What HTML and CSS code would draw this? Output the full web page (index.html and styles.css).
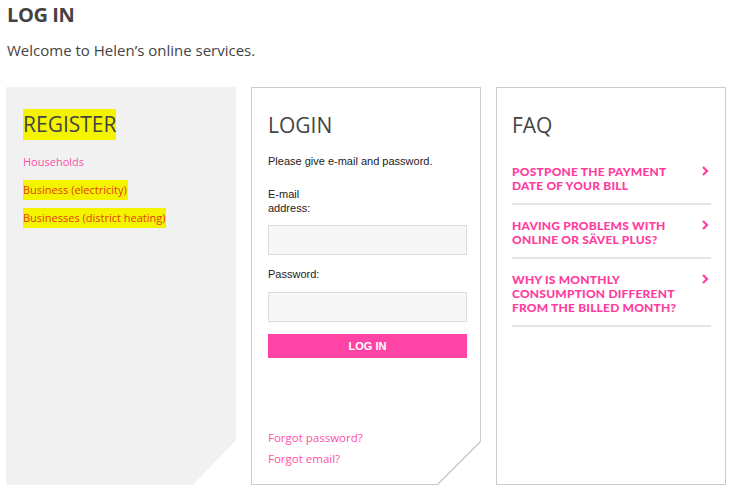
FILE: index.html
```html
<!DOCTYPE html>
<html lang="en">
<head>
    <meta charset="UTF-8">
    <meta name="viewport" content="width=device-width, initial-scale=1.0">
    <title>Log in</title>
    <link rel="stylesheet" href="styles.css">
</head>
<body>
    <div class="page">
        <h1>LOG IN</h1>
        <p class="intro">Welcome to Helen’s online services.</p>

        <div class="panels">
            <section class="panel register">
                <h2><span class="mark">REGISTER</span></h2>
                <ul class="register-links">
                    <li><a href="#">Households</a></li>
                    <li><a href="#" class="marked">Business (electricity)</a></li>
                    <li><a href="#" class="marked">Businesses (district heating)</a></li>
                </ul>
            </section>

            <section class="panel login">
                <h2>LOGIN</h2>
                <form id="loginForm">
                    <p class="hint">Please give e-mail and password.</p>
                    <label for="email">E-mail<br>address:</label>
                    <input type="text" id="email">
                    <label for="password">Password:</label>
                    <input type="password" id="password">
                    <button type="submit">LOG IN</button>
                </form>
                <div class="forgot">
                    <a href="#">Forgot password?</a>
                    <a href="#">Forgot email?</a>
                </div>
            </section>

            <section class="panel faq">
                <h2>FAQ</h2>
                <ul class="faq-list">
                    <li>
                        <a href="#">POSTPONE THE PAYMENT DATE OF YOUR BILL</a>
                        <svg width="8" height="10" viewBox="0 0 8 10"><polyline points="2,1 6,5 2,9" fill="none" stroke="#ff3d9e" stroke-width="2.2"/></svg>
                    </li>
                    <li>
                        <a href="#">HAVING PROBLEMS WITH ONLINE OR SÄVEL PLUS?</a>
                        <svg width="8" height="10" viewBox="0 0 8 10"><polyline points="2,1 6,5 2,9" fill="none" stroke="#ff3d9e" stroke-width="2.2"/></svg>
                    </li>
                    <li>
                        <a href="#">WHY IS MONTHLY CONSUMPTION DIFFERENT FROM THE BILLED MONTH?</a>
                        <svg width="8" height="10" viewBox="0 0 8 10"><polyline points="2,1 6,5 2,9" fill="none" stroke="#ff3d9e" stroke-width="2.2"/></svg>
                    </li>
                </ul>
            </section>
        </div>
    </div>
</body>
</html>
```

FILE: styles.css
```css
* {
    margin: 0;
    padding: 0;
    box-sizing: border-box;
}

body {
    font-family: "Open Sans", Arial, sans-serif;
    background-color: #fff;
    color: #444;
}

a {
    text-decoration: none;
}

ul {
    list-style: none;
}

.page {
    padding: 3px 0 0 7px;
}

h1 {
    font-size: 20px;
    font-weight: 700;
    line-height: 24px;
    color: #444;
    letter-spacing: -0.4px;
}

.intro {
    margin-top: 13px;
    font-size: 15px;
    line-height: 20px;
}

.panels {
    display: grid;
    grid-template-columns: 230px 230px 230px;
    gap: 15px;
    margin: 27px 0 0 -1px;
}

.panel {
    position: relative;
    height: 398px;
    padding: 22px 16px 0;
}

.panel h2 {
    font-family: "Open Sans", sans-serif;
    font-size: 21px;
    font-weight: 400;
    line-height: 30px;
    color: #444;
}

/* register */
.register {
    background-color: #f1f1f1;
    padding-left: 17px;
    clip-path: polygon(0 0, 100% 0, 100% calc(100% - 45px), calc(100% - 43px) 100%, 0 100%);
}

.mark {
    background-color: #f4f400;
    padding: 1px 0 2px;
}

.register-links {
    margin-top: 15px;
    font-size: 11px;
}

.register-links li {
    margin-bottom: 12px;
    line-height: 16px;
}

.register-links a {
    color: #ff4fa7;
}

.register-links a.marked {
    color: #e83a12;
    background-color: #f4f400;
    padding: 2px 1px 3px 0;
}

/* login */
.login {
    border: 1px solid #ccc;
    display: flex;
    flex-direction: column;
}

.login::after {
    content: "";
    position: absolute;
    right: -1px;
    bottom: -1px;
    width: 44px;
    height: 44px;
    background: linear-gradient(to bottom right, transparent calc(50% - 1px), #ccc calc(50% - 0.5px), #ccc calc(50% + 0.5px), #fff calc(50% + 1px));
}

.login form {
    font-family: "Liberation Sans", Arial, sans-serif;
    font-size: 11px;
    color: #222;
    margin-top: 15px;
}

.login .hint {
    line-height: 13px;
    margin-bottom: 19px;
}

.login label {
    display: block;
    line-height: 14px;
}

.login label[for="email"] {
    width: 70px;
}

.login input {
    display: block;
    width: 199px;
    height: 30px;
    margin: 10px 0 12px;
    background-color: #f7f7f7;
    border: 1px solid #ddd;
}

.login #password {
    margin-top: 11px;
}

.login button {
    display: block;
    width: 199px;
    height: 24px;
    background-color: #ff44a5;
    color: #fff;
    border: none;
    font-family: "Liberation Sans", Arial, sans-serif;
    font-size: 11px;
    font-weight: 700;
}

.forgot {
    margin-top: auto;
    margin-bottom: 17px;
    display: flex;
    flex-direction: column;
    gap: 5px;
    font-size: 11.5px;
}

.forgot a {
    color: #ff4fa7;
    line-height: 16px;
}

/* faq */
.faq {
    border: 1px solid #ccc;
    padding-left: 15px;
    padding-right: 14px;
}

.faq-list {
    margin-top: 25px;
}

.faq-list li {
    display: flex;
    justify-content: space-between;
    align-items: flex-start;
    padding: 14px 0 10px;
    border-bottom: 2px solid #e5e5e5;
}

.faq-list li:first-child {
    padding-top: 0;
}

.faq-list a {
    font-family: Lato, sans-serif;
    font-weight: 900;
    font-size: 12px;
    line-height: 14px;
    color: #ff3d9e;
    width: 180px;
    letter-spacing: 0.2px;
}

.faq-list svg {
    margin-top: 1px;
    margin-right: 2px;
}
```
